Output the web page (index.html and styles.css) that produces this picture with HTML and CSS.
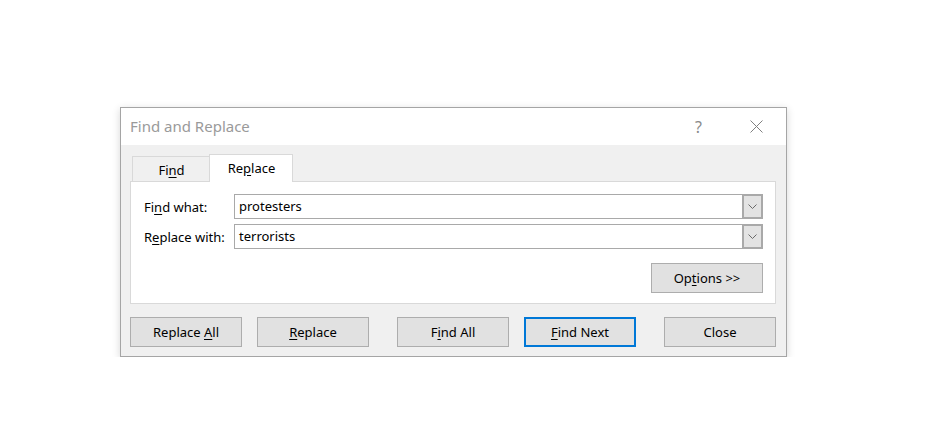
FILE: index.html
```html
<!DOCTYPE html>
<html>
<head>
<meta charset="utf-8">
<link rel="stylesheet" href="styles.css">
</head>
<body>
<div class="dialog">
  <div class="titlebar">
    <span class="title">Find and Replace</span>
    <span class="help">?</span>
    <span class="close-x">
      <svg width="13" height="13" viewBox="0 0 13 13"><path d="M0.5 0.5 L12.5 12.5 M12.5 0.5 L0.5 12.5" stroke="#808080" stroke-width="1" fill="none"/></svg>
    </span>
  </div>
  <div class="body">
    <div class="tabs">
      <div class="tab">Fi<u>n</u>d</div>
      <div class="tab active">Re<u>p</u>lace</div>
    </div>
    <div class="panel">
      <div class="row">
        <label class="lbl">Fi<u>n</u>d what:</label>
        <div class="combo"><span class="val">protesters</span><span class="drop"><svg width="9" height="5" viewBox="0 0 9 5"><path d="M0.5 0.5 L4.5 4.5 L8.5 0.5" stroke="#6a6a6a" stroke-width="1" fill="none"/></svg></span></div>
      </div>
      <div class="row">
        <label class="lbl">R<u>e</u>place with:</label>
        <div class="combo"><span class="val">terrorists</span><span class="drop"><svg width="9" height="5" viewBox="0 0 9 5"><path d="M0.5 0.5 L4.5 4.5 L8.5 0.5" stroke="#6a6a6a" stroke-width="1" fill="none"/></svg></span></div>
      </div>
      <div class="opt-row">
        <button class="btn">Op<u>t</u>ions &gt;&gt;</button>
      </div>
    </div>
    <div class="buttons">
      <button class="btn">Replace <u>A</u>ll</button>
      <button class="btn gap-s"><u>R</u>eplace</button>
      <button class="btn gap-l">F<u>i</u>nd All</button>
      <button class="btn gap-s default"><u>F</u>ind Next</button>
      <button class="btn gap-l">Close</button>
    </div>
  </div>
</div>
</body>
</html>
```
FILE: styles.css
```css
* { box-sizing: border-box; }
html, body { margin: 0; padding: 0; background: #ffffff; }
body {
  font-family: "Segoe UI", "Noto Sans", "Open Sans", sans-serif;
  font-size: 13px;
  color: #000;
}
.dialog {
  margin-left: 120px;
  margin-top: 107px;
  width: 667px;
  height: 250px;
  border: 1px solid #a5a5a5;
  box-shadow: 0 2px 8px rgba(0,0,0,0.16);
  background: #f0f0f0;
  display: flex;
  flex-direction: column;
}
.titlebar {
  height: 37px;
  background: #ffffff;
  display: flex;
  align-items: center;
  padding-left: 9px;
}
.title {
  font-size: 15px;
  color: #9a9a9a;
  flex: 1;
  padding-bottom: 1px;
}
.help {
  font-size: 16px;
  color: #8a8a8a;
  width: 20px;
  margin-right: 35px;
}
.close-x {
  width: 13px;
  height: 13px;
  margin-right: 23px;
  display: flex;
}
.body {
  flex: 1;
  padding: 9px 10px 9px 9px;
  display: flex;
  flex-direction: column;
}
.tabs {
  display: flex;
  align-items: flex-end;
  padding-left: 2px;
  height: 27px;
  position: relative;
  z-index: 1;
}
.tab {
  width: 77px;
  height: 25px;
  border: 1px solid #d9d9d9;
  border-bottom: none;
  border-right: none;
  display: flex;
  align-items: center;
  justify-content: center;
  padding-top: 1px;
  padding-left: 1px;
}
.tab.active {
  width: 84px;
  height: 28px;
  margin-bottom: -1px;
  background: #ffffff;
  border: 1px solid #d9d9d9;
  border-bottom: none;
  padding-top: 0;
  padding-bottom: 1px;
}
.panel {
  height: 123px;
  background: #ffffff;
  border: 1px solid #d9d9d9;
  padding: 12px 12px 0 13px;
  display: flex;
  flex-direction: column;
}
.row {
  display: flex;
  align-items: center;
  height: 25px;
  margin-bottom: 5px;
}
.lbl {
  width: 90px;
}
.combo {
  flex: 1;
  height: 25px;
  border: 1px solid #a9a9a9;
  display: flex;
  align-items: center;
}
.val {
  flex: 1;
  padding-left: 4px;
  padding-bottom: 1px;
}
.drop {
  width: 21px;
  height: 25px;
  margin: -1px -1px -1px 0;
  border: 2px solid #a9a9a9;
  background: #e3e3e3;
  display: flex;
  align-items: center;
  justify-content: center;
}
.opt-row {
  display: flex;
  justify-content: flex-end;
  margin-top: 9px;
}
.btn {
  width: 112px;
  height: 30px;
  background: #e1e1e1;
  border: 1px solid #adadad;
  font-family: inherit;
  font-size: 13px;
  color: #000;
  padding: 0 0 1px 0;
}
.buttons {
  display: flex;
  margin-top: 13px;
}
.gap-s { margin-left: 15px; }
.gap-l { margin-left: 28px; }
.btn.default {
  border: 2px solid #0078d7;
}
u { text-underline-offset: 2px; }
```
